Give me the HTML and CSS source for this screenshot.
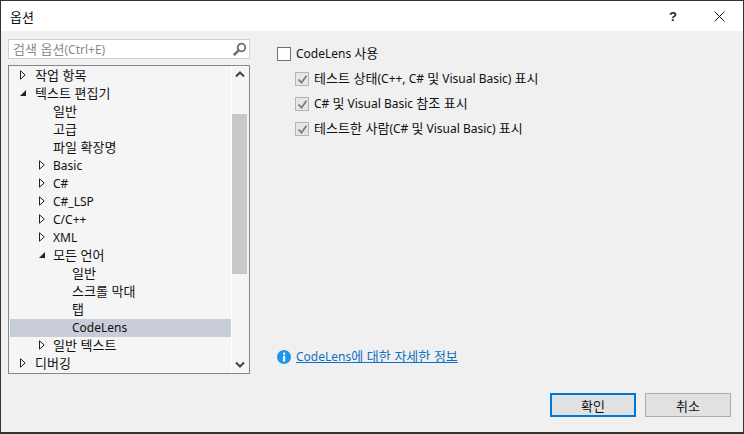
FILE: index.html
```html
<!DOCTYPE html>
<html lang="ko">
<head>
<meta charset="utf-8">
<title>옵션</title>
<link rel="stylesheet" href="styles.css">
</head>
<body>
<div class="dialog">
  <header class="titlebar">
    <span class="title ko">옵션</span>
    <div class="title-actions">
      <span class="help">?</span>
      <svg class="close" width="11" height="11" viewBox="0 0 11 11"><path d="M.5.5l10 10M10.5.5l-10 10" stroke="#1a1a1a" fill="none"/></svg>
    </div>
  </header>
  <div class="body">
    <div class="main">
      <aside class="left">
        <div class="search">
          <span class="search-text"><span class="ko">검색 옵션</span>(Ctrl+E)</span>
          <svg width="15" height="15" viewBox="0 0 15 15"><circle cx="9.5" cy="5.5" r="3.8" fill="none" stroke="#6d6d6d" stroke-width="1.8"/><path d="M6.7 8.3L1.8 13.2" stroke="#6d6d6d" stroke-width="2.6"/></svg>
        </div>
        <div class="tree">
          <ul class="rows">
            <li class="row l0"><svg class="arrow" viewBox="0 0 6 10"><path d="M.5.8L5.2 5 .5 9.2z" fill="#fff" stroke="#222"/></svg><span class="ko">작업 항목</span></li>
            <li class="row l0"><svg class="arrow" viewBox="0 0 6 10"><path d="M6 2v6H0z" fill="#222"/></svg><span class="ko">텍스트 편집기</span></li>
            <li class="row l1"><span class="ko">일반</span></li>
            <li class="row l1"><span class="ko">고급</span></li>
            <li class="row l1"><span class="ko">파일 확장명</span></li>
            <li class="row l1"><svg class="arrow" viewBox="0 0 6 10"><path d="M.5.8L5.2 5 .5 9.2z" fill="#fff" stroke="#222"/></svg><span>Basic</span></li>
            <li class="row l1"><svg class="arrow" viewBox="0 0 6 10"><path d="M.5.8L5.2 5 .5 9.2z" fill="#fff" stroke="#222"/></svg><span>C#</span></li>
            <li class="row l1"><svg class="arrow" viewBox="0 0 6 10"><path d="M.5.8L5.2 5 .5 9.2z" fill="#fff" stroke="#222"/></svg><span>C#_LSP</span></li>
            <li class="row l1"><svg class="arrow" viewBox="0 0 6 10"><path d="M.5.8L5.2 5 .5 9.2z" fill="#fff" stroke="#222"/></svg><span>C/C++</span></li>
            <li class="row l1"><svg class="arrow" viewBox="0 0 6 10"><path d="M.5.8L5.2 5 .5 9.2z" fill="#fff" stroke="#222"/></svg><span>XML</span></li>
            <li class="row l1"><svg class="arrow" viewBox="0 0 6 10"><path d="M6 2v6H0z" fill="#222"/></svg><span class="ko">모든 언어</span></li>
            <li class="row l2"><span class="ko">일반</span></li>
            <li class="row l2"><span class="ko">스크롤 막대</span></li>
            <li class="row l2"><span class="ko">탭</span></li>
            <li class="row l2 selected"><span>CodeLens</span></li>
            <li class="row l1"><svg class="arrow" viewBox="0 0 6 10"><path d="M.5.8L5.2 5 .5 9.2z" fill="#fff" stroke="#222"/></svg><span class="ko">일반 텍스트</span></li>
            <li class="row l0"><svg class="arrow" viewBox="0 0 6 10"><path d="M.5.8L5.2 5 .5 9.2z" fill="#fff" stroke="#222"/></svg><span class="ko">디버깅</span></li>
          </ul>
          <div class="scrollbar">
            <svg width="16" height="17" viewBox="0 0 16 17"><path d="M4 10.5l4-4 4 4" fill="none" stroke="#444" stroke-width="2"/></svg>
            <div class="track"><div class="thumb"></div></div>
            <svg width="16" height="17" viewBox="0 0 16 17"><path d="M4 6.5l4 4 4-4" fill="none" stroke="#444" stroke-width="2"/></svg>
          </div>
        </div>
      </aside>
      <section class="right">
        <div class="options">
          <label class="opt"><span class="box"></span><span class="opt-text">CodeLens <span class="ko">사용</span></span></label>
          <label class="opt sub"><span class="box on"><svg width="11" height="11" viewBox="0 0 11 11"><path d="M1.5 5.5l3 3.2 5-7" fill="none" stroke="#7a7a7a" stroke-width="1.8"/></svg></span><span class="opt-text"><span class="ko">테스트 상태</span>(C++, C# <span class="ko">및</span> Visual Basic) <span class="ko">표시</span></span></label>
          <label class="opt sub"><span class="box on"><svg width="11" height="11" viewBox="0 0 11 11"><path d="M1.5 5.5l3 3.2 5-7" fill="none" stroke="#7a7a7a" stroke-width="1.8"/></svg></span><span class="opt-text">C# <span class="ko">및</span> Visual Basic <span class="ko">참조 표시</span></span></label>
          <label class="opt sub"><span class="box on"><svg width="11" height="11" viewBox="0 0 11 11"><path d="M1.5 5.5l3 3.2 5-7" fill="none" stroke="#7a7a7a" stroke-width="1.8"/></svg></span><span class="opt-text"><span class="ko">테스트한 사람</span>(C# <span class="ko">및</span> Visual Basic) <span class="ko">표시</span></span></label>
        </div>
        <div class="info">
          <svg width="14" height="14" viewBox="0 0 14 14"><circle cx="7" cy="7" r="7" fill="#1c97ea"/><rect x="6" y="5.8" width="2.2" height="5.6" fill="#fff"/><rect x="6" y="2.6" width="2.2" height="2.1" fill="#fff"/></svg>
          <a class="link" href="#">CodeLens<span class="ko">에 대한 자세한 정보</span></a>
        </div>
      </section>
    </div>
    <footer class="buttons">
      <button class="btn primary"><span class="ko">확인</span></button>
      <button class="btn"><span class="ko">취소</span></button>
    </footer>
  </div>
</div>
</body>
</html>
```
FILE: styles.css
```css
* { box-sizing: border-box; }
html, body { margin: 0; padding: 0; }
body { width: 744px; height: 434px; font-family: "Noto Sans", "Noto Sans CJK KR", sans-serif; font-size: 12px; color: #111; overflow: hidden; }
.ko { font-family: "Noto Sans CJK KR", sans-serif; font-size: 13px; }
.dialog { width: 744px; height: 434px; border: 1px solid #333; border-bottom-width: 2px; display: flex; flex-direction: column; background: #f0f0f0; }
.titlebar { height: 30px; background: #fff; display: flex; align-items: center; justify-content: space-between; padding: 0 18px 0 9px; flex: none; }
.title { color: #111; }
.title-actions { display: flex; align-items: center; gap: 37px; }
.help { font-size: 13px; font-weight: 700; color: #222; font-family: "Liberation Sans", sans-serif; }
.body { flex: 1; display: flex; flex-direction: column; padding: 8px 7px 0; min-height: 0; }
.main { display: flex; flex: 1; min-height: 0; }
.left { width: 242px; flex: none; display: flex; flex-direction: column; gap: 6px; }
.search { height: 20px; background: #fff; border: 1px solid #cfcfdc; display: flex; align-items: center; justify-content: space-between; padding: 0 2px 0 4px; flex: none; }
.search-text { color: #8a8a8a; line-height: 18px; }
.tree { height: 309px; border: 1px solid #828790; background: #f5f5f5; display: flex; flex: none; padding-left: 1px; }
.rows { list-style: none; margin: 0; padding: 1px 0 0; flex: 1; min-width: 0; }
.row { height: 18px; display: flex; align-items: center; position: relative; white-space: nowrap; line-height: 18px; }
.row span { display: block; }
.row .ko { margin-bottom: 2px; }
.l0 { padding-left: 25px; }
.l1 { padding-left: 43px; }
.l2 { padding-left: 62px; }
.arrow { position: absolute; width: 6px; height: 10px; top: 3px; }
.l0 .arrow { left: 10px; }
.l1 .arrow { left: 29px; }
.selected { background: #c9ccd9; }
.scrollbar { width: 18px; flex: none; background: #f5f5f5; display: flex; flex-direction: column; border-left: 1px solid #fff; }
.track { flex: 1; padding-top: 31px; }
.thumb { height: 160px; width: 15px; background: #c8c8c8; }
.right { flex: 1; padding: 6px 0 0 27px; display: flex; flex-direction: column; min-width: 0; }
.options { display: flex; flex-direction: column; gap: 7px; flex: 1; }
.opt { display: flex; align-items: center; gap: 5px; height: 18px; line-height: 18px; }
.opt-text { margin-bottom: 2px; }
.sub { padding-left: 18px; }
.box { width: 14px; height: 14px; border: 1px solid #6f6f6f; background: #fff; display: flex; align-items: center; justify-content: center; flex: none; }
.box.on { border-color: #b4b4b4; background: #e6e6e6; }
.info { display: flex; align-items: center; gap: 5px; height: 18px; margin-bottom: 8px; line-height: 18px; }
.link { color: #0e70c0; text-decoration: underline; margin-bottom: 2px; }
.buttons { display: flex; justify-content: flex-end; gap: 9px; padding: 0 5px 15px 0; margin-top: 19px; }
.btn { width: 86px; height: 24px; border: 1px solid #adadad; background: #e1e1e1; font: inherit; color: #111; padding: 0; }
.btn.primary { border: 2px solid #0078d7; }
```
